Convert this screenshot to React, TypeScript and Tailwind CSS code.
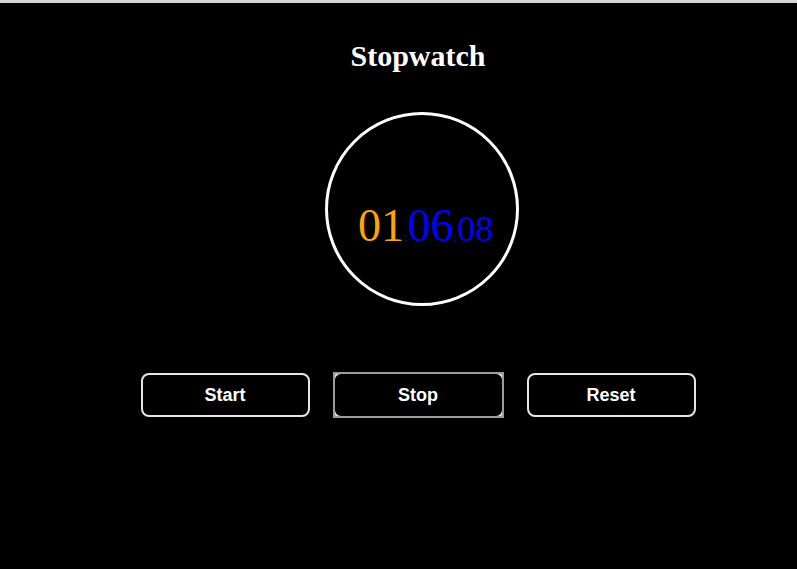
import React from 'react';

const serif = { fontFamily: '"Liberation Serif", "Times New Roman", serif' };

const Btn: React.FC<{ label: string }> = ({ label }) => (
    <button className="w-[169px] h-[44px] rounded-lg border-2 border-[#e6e6e6] bg-black text-white text-[18px] font-bold font-['Liberation_Sans',Arial,sans-serif]">
        {label}
    </button>
);

export default function App() {
    return (
        <div className="min-h-screen bg-[#d4d4d4] pt-[3px]">
            <div className="min-h-[566px] bg-black flex flex-col items-center pl-[39px]">
                <h1 style={serif} className="mt-[36px] text-[30px] leading-[34px] font-bold text-white">
                    Stopwatch
                </h1>

                <div className="mt-[39px] ml-[7px] w-[194px] h-[194px] rounded-full border-[3px] border-white flex items-center justify-center">
                    <div style={serif} className="mt-[34px] ml-[8px] flex items-baseline leading-none">
                        <span className="text-[46px] text-[#ffa500]">01</span>
                        <span className="text-[13px] text-[#0000ff]">:</span>
                        <span className="text-[46px] text-[#0000ff]">06</span>
                        <span className="text-[13px] text-[#0000ff]">:</span>
                        <span className="text-[36px] text-[#0000ff]">08</span>
                    </div>
                </div>

                <div className="mt-[67px] flex gap-[23px]">
                    <Btn label="Start" />
                    {/* focused button: square focus ring drawn over the rounded border */}
                    <button className="relative w-[171px] h-[46px] -my-[1px] bg-black text-white text-[18px] font-bold font-['Liberation_Sans',Arial,sans-serif]">
                        <span className="absolute inset-0 rounded-lg border-2 border-[#e6e6e6]" />
                        <span className="absolute inset-0 border-2 border-[#9c9c9c]" />
                        <span className="relative">Stop</span>
                    </button>
                    <Btn label="Reset" />
                </div>
            </div>
        </div>
    );
}
